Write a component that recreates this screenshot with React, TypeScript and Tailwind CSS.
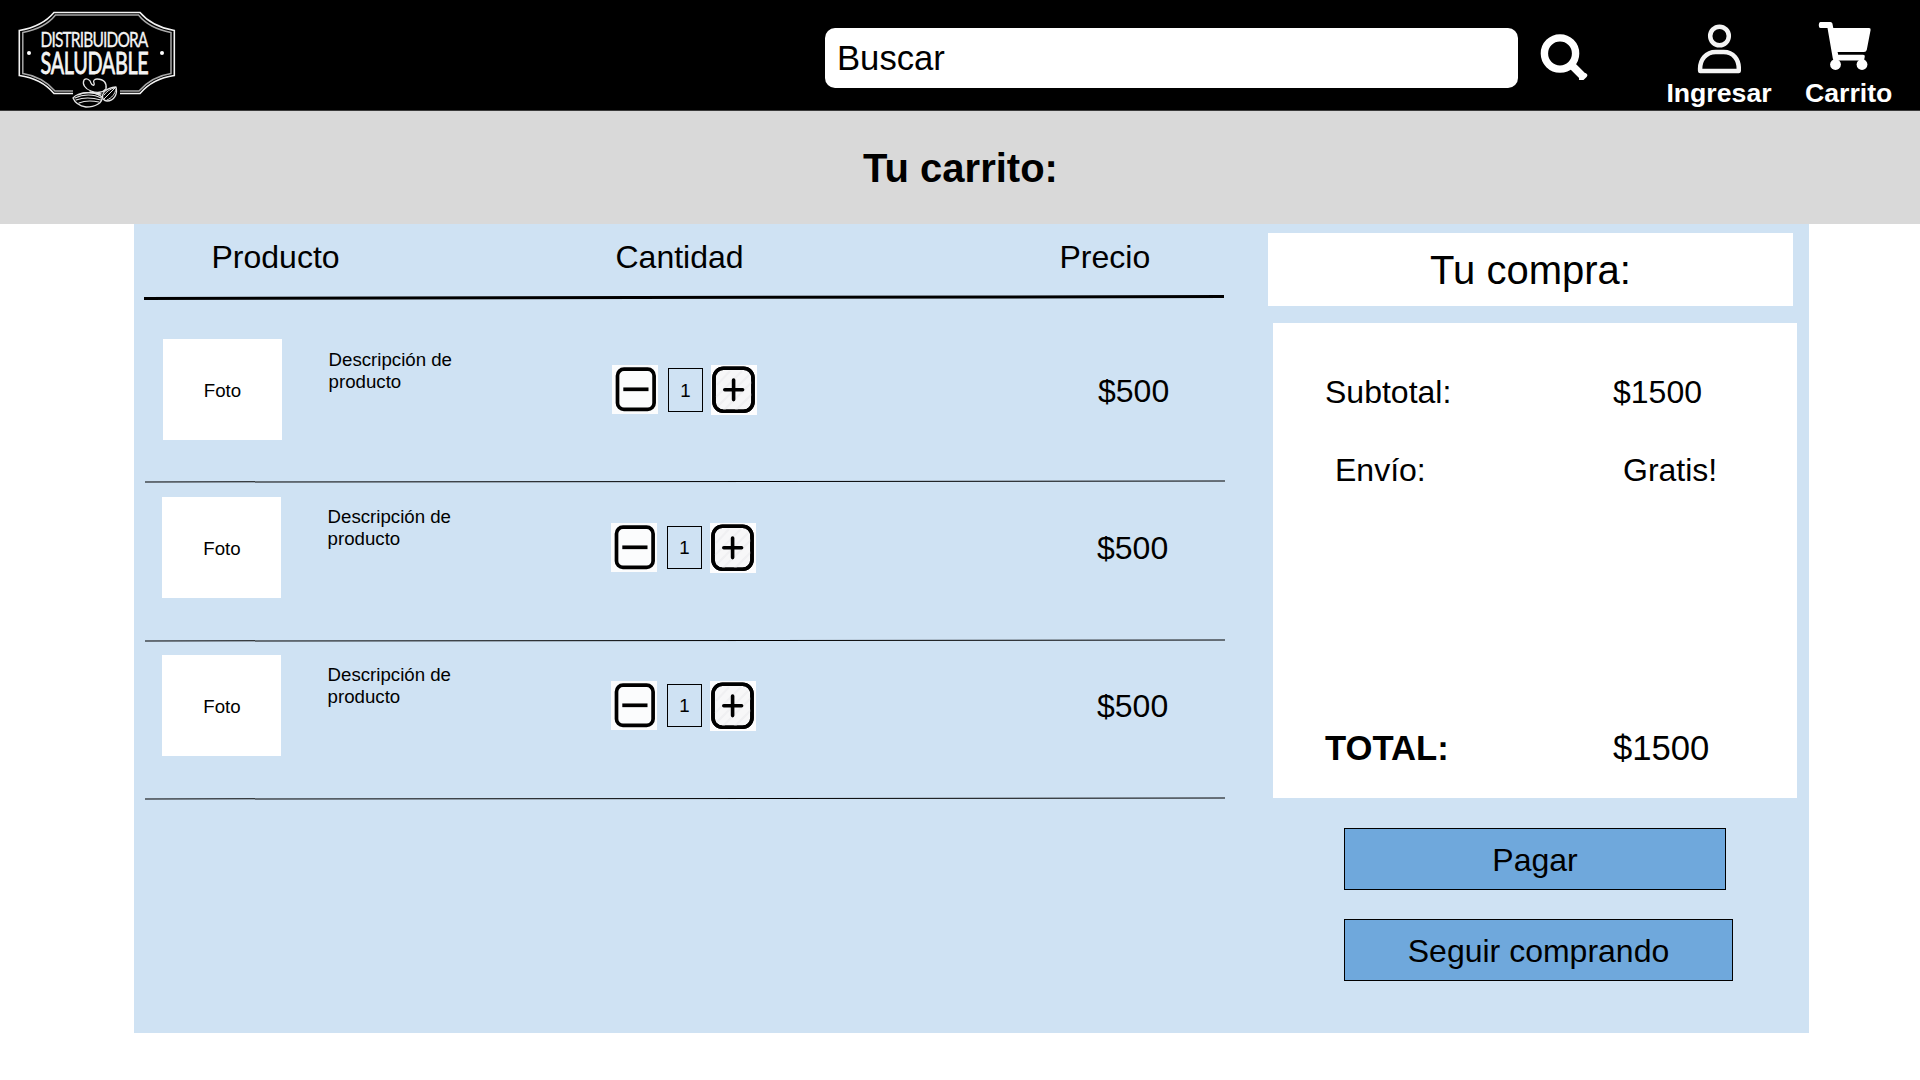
import React from "react";

const products = [
  { id: 1, price: "$500", qty: 1, shift: "h-[156.4px]", foto: "pt-[2px]", desc: "mt-[24px]", qtyBox: "h-[44px]", priceTop: "mt-[48px]" },
  { id: 2, price: "$500", qty: 1, shift: "h-[156.9px] -ml-px", foto: "pl-px pt-[2px]", desc: "mt-[23px]", qtyBox: "h-[43px]", priceTop: "mt-[47px]" },
  { id: 3, price: "$500", qty: 1, shift: "h-[156.9px] -ml-px", foto: "pl-px pt-[2px]", desc: "mt-[23px]", qtyBox: "h-[43px]", priceTop: "mt-[47px]" },
];

function Logo() {
  return (
    <svg width="200" height="110" viewBox="0 0 200 110" fill="none" aria-label="Distribuidora Saludable">
      <g stroke="#f4f4f4" strokeWidth="1.6">
        <path d="M73 93.5H54C46 84 34 77.500 19.300 75.500V30.500C34 28 46 22 54 12.500H140C148 22 160 28 174.300 30.500V75.500C160 77.500 148 84 140 93.500H120" />
      </g>
      <g stroke="#a8a8a8" strokeWidth="1.5">
        <path d="M73 91H55C47 82 36 75.500 22.800 73.500V32.500C36 30 48 24.500 55.500 15H138.500C146 24.500 158 30 171 32.500V73.500C158 75.500 147 82 139 91H120" />
      </g>
      <circle cx="29" cy="53" r="2" fill="#fff" />
      <circle cx="162" cy="53" r="2" fill="#fff" />
      <g fill="#f4f4f4" stroke="#f4f4f4" fontFamily="Lato, sans-serif">
        <text x="0" y="0" transform="translate(40.500 46.800) scale(0.760 1)" strokeWidth="0.3" fontSize="20.500" textLength="142" lengthAdjust="spacing">
          DISTRIBUIDORA
        </text>
        <text x="0" y="0" transform="translate(40.500 73.500) scale(0.660 1)" strokeWidth="0.8" fontSize="30" textLength="164" lengthAdjust="spacing">
          SALUDABLE
        </text>
      </g>
      <g stroke="#e6e6e6" strokeWidth="1.3" strokeLinecap="round" strokeLinejoin="round">
        <path d="M84 80C82 84 85 89 91 91C96 93 103 93 106 89C107 83 104 79 97 79C94 79 93 81 94 83C95 86 92 86 91 83C90 79 86 78 84 80Z" />
        <path d="M73 98C78 92 95 90 102 97C103 103 95 107 86 107C80 106 75 103 73 98Z" fill="#000" />
        <path d="M75 98C83 94 94 94 101 98M76 100C84 97 94 98 101 100M79 103C86 100 94 101 99 102M78 95C85 92 93 92 99 95" strokeWidth="1.1" />
        <path d="M103 99C101 93 106 88 116 87C118 94 114 101 107 101C105 101 104 100 103 99Z" fill="#000" />
        <path d="M104 99L115 88M107 100C112 98 115 94 116 89M104 95C106 92 110 89 114 88" strokeWidth="1" />
        <path d="M90 92L101 94" />
      </g>
    </svg>
  );
}

function SearchIcon() {
  return (
    <svg width="50" height="50" viewBox="0 0 50 50" fill="none">
      <circle cx="22" cy="23.500" r="15.600" stroke="#fff" strokeWidth="7.400" />
      <path d="M33 34.500L45.500 47" stroke="#fff" strokeWidth="7.600" />
      <path d="M43.300 49L47 45.300" stroke="#fff" strokeWidth="4.500" strokeLinecap="round" />
    </svg>
  );
}

function UserIcon() {
  return (
    <svg width="44" height="50" viewBox="0 0 44 50" fill="none" stroke="#f4f4f4" strokeWidth="4.500">
      <circle cx="22.500" cy="12" r="9.300" />
      <path d="M3.200 47C2.200 35 9.700 28 18.700 28H26.700C35.700 28 42.700 35 41.700 47Z" strokeLinejoin="round" />
    </svg>
  );
}

function CartIcon() {
  return (
    <svg width="54" height="50" viewBox="0 0 54 50" fill="#fff">
      <path d="M2.500 2H12.500Q14 2 14.400 3.600L15.300 8H51Q53 8 52.600 10L48.800 29.700Q48.300 32 46 32H19.600L20.200 34.800H45Q47.200 34.800 46.700 37L46 40.500H17Q15 40.500 14.800 38.500L9.500 8H2.500Q0.800 8 0.800 5.500Q0.800 2 2.500 2Z" />
      <circle cx="17.500" cy="44.500" r="5.400" />
      <circle cx="44" cy="44.500" r="5.400" />
    </svg>
  );
}

function MinusButton() {
  return (
    <button className="mt-[40px] h-[49px] w-[46px] shrink-0 bg-[#fbfcfd]" aria-label="Quitar">
      <svg width="46" height="49" viewBox="0 0 46 49" fill="none" stroke="#000" strokeWidth="3.700">
        <rect x="5.500" y="4.200" width="36.600" height="40.200" rx="6.500" />
        <path d="M11.300 24.300H36.500" />
      </svg>
    </button>
  );
}

function PlusButton() {
  return (
    <button className="ml-2 mt-[40px] h-[50px] w-[46px] shrink-0 bg-[#fdfdfe]" aria-label="Agregar">
      <svg width="46" height="50" viewBox="0 0 46 50" fill="none" stroke="#000" strokeWidth="3.600">
        <rect x="3" y="3.300" width="39" height="43" rx="9.500" fill="#f7f7f8" />
        <path d="M6 20L19 6M5 32L31 6M5 43L38 10M12 46L41 17M24 46L41 29" stroke="#f0f0f2" strokeWidth="2" />
        <rect x="3" y="3.300" width="39" height="43" rx="9.500" />
        <path d="M13.800 24.800H31.600M22.600 15V34.600" strokeLinecap="round" />
      </svg>
    </button>
  );
}

export default function App() {
  return (
    <div className="h-[1080px] w-[1920px] overflow-hidden bg-white font-['Liberation_Sans',Arial,sans-serif] text-black">
      <header className="flex h-[111px] items-start border-b border-[#3a3a3a] bg-black">
        <Logo />
        <div className="ml-[625px] mt-7 flex h-[60px] w-[693px] items-center rounded-[10px] bg-white pl-3 text-[34.67px] leading-10">
          <span>Buscar</span>
        </div>
        <div className="ml-5 mt-[30px]">
          <SearchIcon />
        </div>
        <div className="ml-[78px] mt-6 flex w-[106px] flex-col items-center text-[26.67px] font-bold leading-[30px] text-white">
          <UserIcon />
          <span className="mt-[4px]">Ingresar</span>
        </div>
        <div className="ml-[33px] mt-5 flex w-[88px] flex-col text-[26.67px] font-bold leading-[30px] text-white">
          <div className="ml-[13px]">
            <CartIcon />
          </div>
          <span className="mt-[8px]">Carrito</span>
        </div>
      </header>

      <div className="flex h-[113px] items-center justify-center bg-[#d9d9d9] pl-px">
        <h1 className="text-[40px] font-bold leading-[46px]">Tu carrito:</h1>
      </div>

      <main className="ml-[134px] flex h-[809px] w-[1675px] bg-[#cfe2f3]">
        <section className="ml-2.5 w-[1081px]">
          <div className="flex h-[72px] pt-[15px] text-[32px] leading-9">
            <span className="ml-[67.5px] w-[404px]">Producto</span>
            <span className="w-[444px]">Cantidad</span>
            <span>Precio</span>
          </div>
          <div className="ml-[0.3px] h-[3px] w-[1080px] rotate-[-0.1deg] bg-black" />
          <div className="mt-[26px]">
            {products.map((p) => (
              <div key={p.id} className="flex h-[158px] flex-col">
                <div className={"flex shrink-0 items-start pl-[19px] " + p.shift}>
                  <div className={"mt-[14px] flex h-[101px] w-[119px] shrink-0 items-center justify-center bg-white text-[18.67px] leading-[22px] " + p.foto}>
                    Foto
                  </div>
                  <p className={"ml-[46.6px] w-[283.4px] shrink-0 text-[18.67px] leading-[22px] " + p.desc}>
                    Descripción de
                    <br />
                    producto
                  </p>
                  <MinusButton />
                  <div className={"ml-2.5 mt-[43px] flex w-[35px] shrink-0 items-center justify-center border border-black pt-[1px] text-[18.67px] leading-[22px] " + p.qtyBox}>
                    {p.qty}
                  </div>
                  <PlusButton />
                  <span className={"ml-[341px] text-[32px] leading-9 " + p.priceTop}>{p.price}</span>
                </div>
                <div className="ml-[0.5px] h-[1.3px] w-[1080px] shrink-0 rotate-[-0.05deg] bg-black" />
              </div>
            ))}
          </div>
        </section>

        <aside className="ml-[43px] flex w-[530px] flex-col pt-[9px]">
          <h2 className="flex h-[73px] w-[525px] items-center justify-center bg-white text-[40px] leading-[46px]">Tu compra:</h2>
          <div className="ml-[5px] mt-[17px] flex h-[475px] w-[524px] flex-col bg-white pt-[51px] text-[32px] leading-9">
            <div className="flex pl-[52px]">
              <span className="w-[288px]">Subtotal:</span>
              <span>$1500</span>
            </div>
            <div className="mt-[42px] flex pl-[62px]">
              <span className="w-[288px]">Envío:</span>
              <span>Gratis!</span>
            </div>
            <div className="mb-[30px] mt-auto flex pl-[52px] text-[34.67px] leading-10">
              <span className="w-[288px] font-bold">TOTAL:</span>
              <span>$1500</span>
            </div>
          </div>
          <button className="ml-[76px] mt-[30px] h-[62px] w-[382px] border border-black bg-[#6fa8dc] pt-px text-[32px] leading-9">Pagar</button>
          <button className="ml-[76px] mt-[29px] h-[62px] w-[389px] border border-black bg-[#6fa8dc] pt-px text-[32px] leading-9">Seguir comprando</button>
        </aside>
      </main>
    </div>
  );
}
